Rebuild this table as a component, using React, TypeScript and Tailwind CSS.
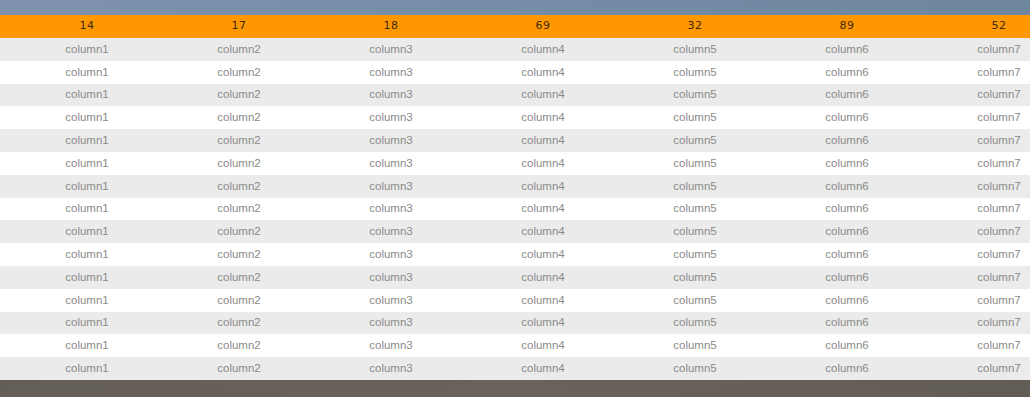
const headers = ['14', '17', '18', '69', '32', '89', '52']
const columns = ['column1', 'column2', 'column3', 'column4', 'column5', 'column6', 'column7']
const rows = Array.from({ length: 15 }, (_, i) => i)

export default function App() {
  return (
    <div className="w-[1030px] h-[397px] overflow-hidden flex flex-col bg-[#666059]">
      {/* top strip */}
      <div className="h-[15px] shrink-0 bg-gradient-to-r from-[#7e92ae] to-[#6f869f]" />

      <div className="shrink-0 overflow-hidden">
        {/* header row */}
        <div className="h-[23px] bg-[#ff9800] flex pl-[11px]">
          {headers.map((h, i) => (
            <div
              key={i}
              className="w-[152px] shrink-0 flex items-center justify-center font-['DejaVu_Sans',sans-serif] text-[11px] tracking-[0.5px] text-[#3b2a0c]"
            >
              {h}
            </div>
          ))}
        </div>

        {/* body rows */}
        {rows.map((r) => (
          <div
            key={r}
            className={`h-[22.8px] flex pl-[11px] ${r % 2 === 0 ? 'bg-[#ebebeb]' : 'bg-white'}`}
          >
            {columns.map((c) => (
              <div
                key={c}
                className="w-[152px] shrink-0 flex items-center justify-center font-['Liberation_Sans',Arial,sans-serif] text-[11.5px] text-[#8a8a8a]"
              >
                {c}
              </div>
            ))}
          </div>
        ))}
      </div>

      {/* bottom background */}
      <div className="flex-1 bg-gradient-to-r from-[#645e58] via-[#6a635c] to-[#625c56]" />
    </div>
  )
}
